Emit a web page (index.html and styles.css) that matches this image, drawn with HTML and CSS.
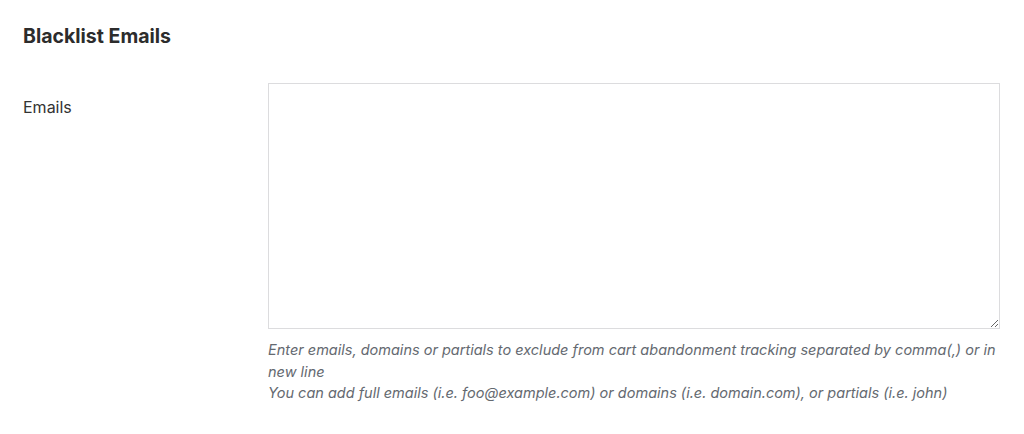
FILE: index.html
```html
<!DOCTYPE html>
<html>
<head>
<meta charset="utf-8">
<link rel="stylesheet" href="styles.css">
</head>
<body>
<div class="wrap">
  <h2 class="title">Blacklist Emails</h2>
  <div class="row">
    <label class="label" for="emails">Emails</label>
    <div class="field">
      <textarea id="emails" class="area"></textarea>
      <p class="desc">Enter emails, domains or partials to exclude from cart abandonment tracking separated by comma(,) or in new line<br>You can add full emails (i.e. foo@example.com) or domains (i.e. domain.com), or partials (i.e. john)</p>
    </div>
  </div>
</div>
</body>
</html>
```
FILE: styles.css
```css
html, body {
  margin: 0;
  padding: 0;
  background: #ffffff;
}
body {
  font-family: Inter, "Liberation Sans", Arial, sans-serif;
  font-size: 14px;
  color: #333333;
}
.wrap {
  padding: 24px 0 0 23px;
}
.title {
  margin: 0;
  font-size: 19.5px;
  line-height: 24px;
  font-weight: 700;
  color: #2c2c2c;
}
.row {
  display: flex;
  margin-top: 35px;
}
.label {
  width: 245px;
  flex: none;
  padding-top: 15px;
  font-size: 16px;
  line-height: 18px;
  color: #333333;
}
.field {
  width: 732px;
}
.area {
  display: block;
  box-sizing: border-box;
  width: 732px;
  height: 246px;
  margin: 0;
  border: 1px solid #dcdcde;
  border-radius: 0;
  background: #fff;
  resize: vertical;
  font-family: inherit;
  font-size: 14px;
}
.desc {
  margin: 10px 0 0 0;
  font-style: italic;
  font-size: 14.5px;
  line-height: 21.5px;
  color: #646970;
}
```
